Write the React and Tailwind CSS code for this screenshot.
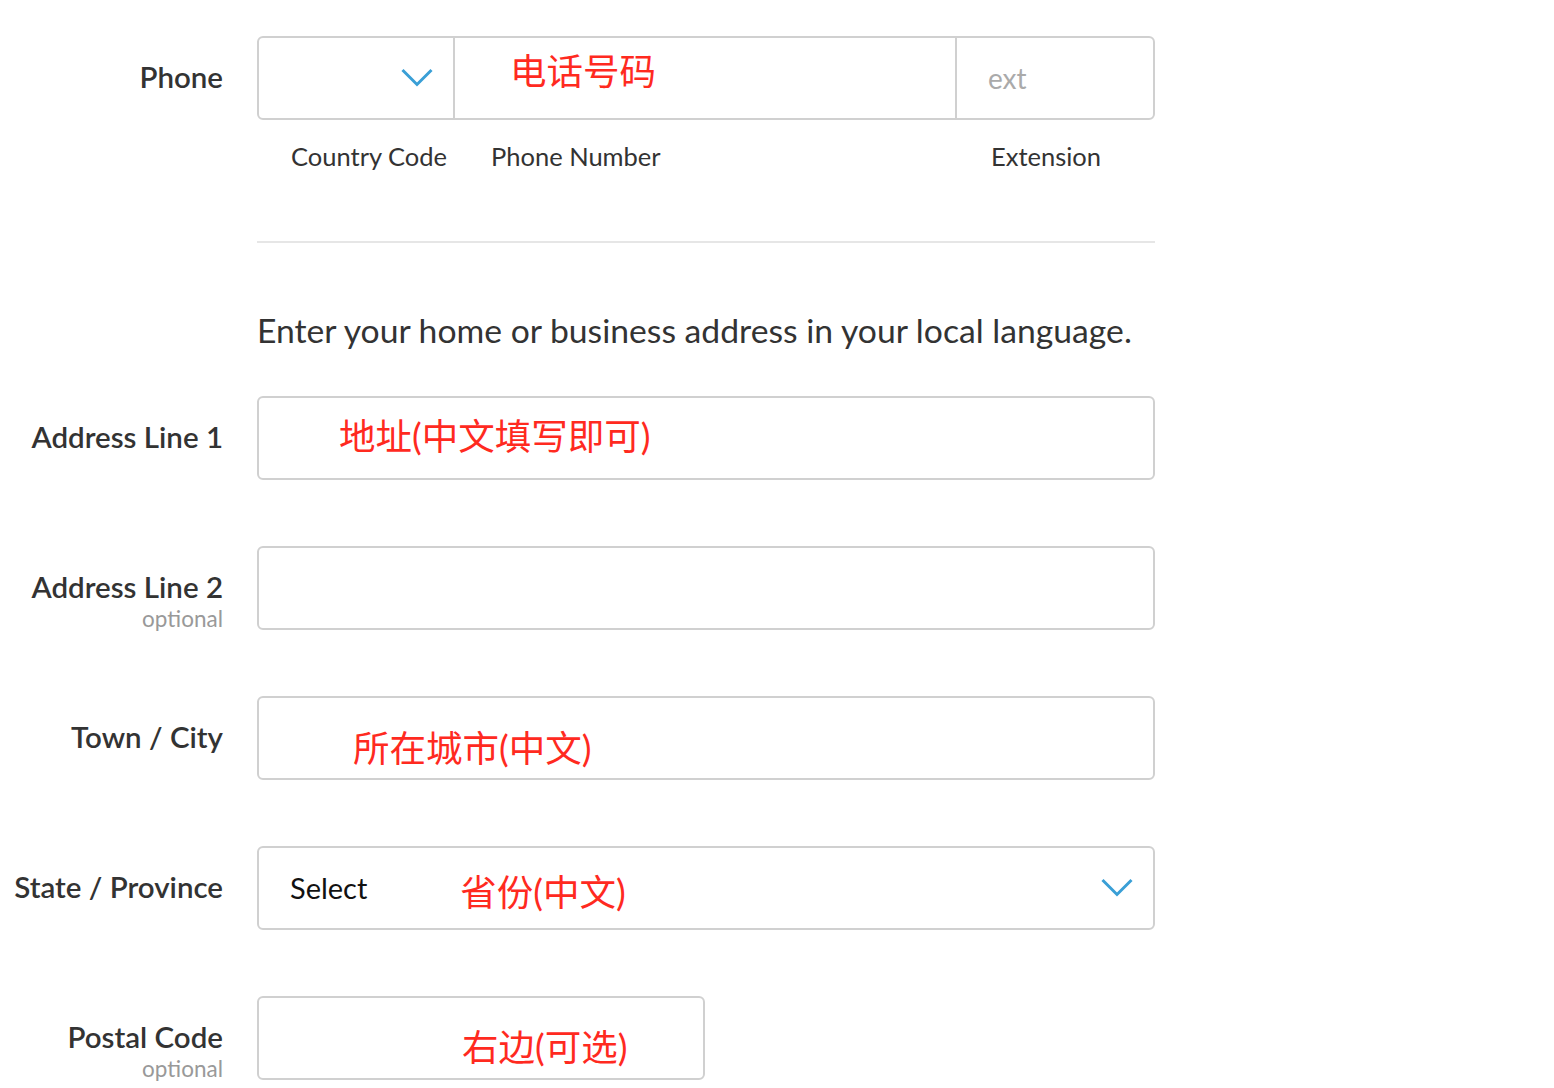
const Chevron = ({ className = '' }) => (
  <svg width="32" height="20" viewBox="0 0 32 20" fill="none" className={className}>
    <path d="M1.5 2 L16 16.5 L30.5 2" stroke="#3a9fd6" strokeWidth="3" />
  </svg>
);

const Note = ({ children, className = '' }) => (
  <span
    className={`text-[36.5px] leading-none text-[#ff2a1f] ${className}`}
    style={{ fontFamily: 'Lato, "Noto Sans CJK SC", sans-serif' }}
  >
    {children}
  </span>
);

const FieldRow = ({ label, optional, children, width = 'w-[898px]' }) => (
  <div className="flex items-start mt-[66px]">
    <div className="w-[223px] h-[84px] flex flex-col items-end pt-[24px]">
      <span className="text-[29.5px] leading-[34px] font-semibold text-[#333333]">{label}</span>
      {optional && (
        <span className="text-[22.5px] leading-[22px] mt-[4px] text-[#999999]">optional</span>
      )}
    </div>
    <div className={`ml-[34px] h-[84px] ${width} border-2 border-[#d0d0d0] rounded-[6px] bg-white flex items-center`}>
      {children}
    </div>
  </div>
);

export default function App() {
  return (
    <div
      className="min-h-screen bg-white pt-[36px] text-[#333333]"
      style={{ fontFamily: 'Lato, "Noto Sans CJK SC", sans-serif' }}
    >
      {/* Phone */}
      <div className="flex items-start">
        <div className="w-[223px] flex justify-end pt-[24px]">
          <span className="text-[29.5px] leading-[34px] font-semibold">Phone</span>
        </div>
        <div className="ml-[34px] w-[898px]">
          <div className="h-[84px] border-2 border-[#d0d0d0] rounded-[6px] flex">
            <div className="w-[196px] flex items-center justify-end pr-[20px] border-r-2 border-[#d0d0d0]">
              <Chevron />
            </div>
            <div className="flex-1 flex items-center pl-[55px] pb-[14px] border-r-2 border-[#d0d0d0]">
              <Note>电话号码</Note>
            </div>
            <div className="w-[196px] flex items-center pl-[31px]">
              <span className="text-[28px] text-[#aaaaaa]">ext</span>
            </div>
          </div>
          <div className="flex mt-[22px] text-[25.5px] leading-[28px]">
            <div className="w-[198px] pl-[34px]">Country Code</div>
            <div className="flex-1 pl-[36px]">Phone Number</div>
            <div className="w-[198px] pl-[34px]">Extension</div>
          </div>
          <div className="mt-[71px] h-[2px] bg-[#e6e6e6]" />
          <p className="mt-[67px] text-[33.7px] leading-[40px] whitespace-nowrap">
            Enter your home or business address in your local language.
          </p>
        </div>
      </div>

      <div className="-mt-[20px]">
        <FieldRow label="Address Line 1">
          <Note className="ml-[80px] pb-[4px]">地址(中文填写即可)</Note>
        </FieldRow>
        <FieldRow label="Address Line 2" optional />
        <FieldRow label="Town / City">
          <Note className="ml-[94px] pt-[20px]">所在城市(中文)</Note>
        </FieldRow>
        <FieldRow label="State / Province">
          <span className="ml-[31px] text-[29px] text-[#111111]">Select</span>
          <Note className="ml-[93px] pt-[8px]">省份(中文)</Note>
          <Chevron className="ml-auto mr-[20px]" />
        </FieldRow>
        <FieldRow label="Postal Code" optional width="w-[448px]">
          <Note className="ml-[203px] pt-[18px]">右边(可选)</Note>
        </FieldRow>
      </div>
    </div>
  );
}
